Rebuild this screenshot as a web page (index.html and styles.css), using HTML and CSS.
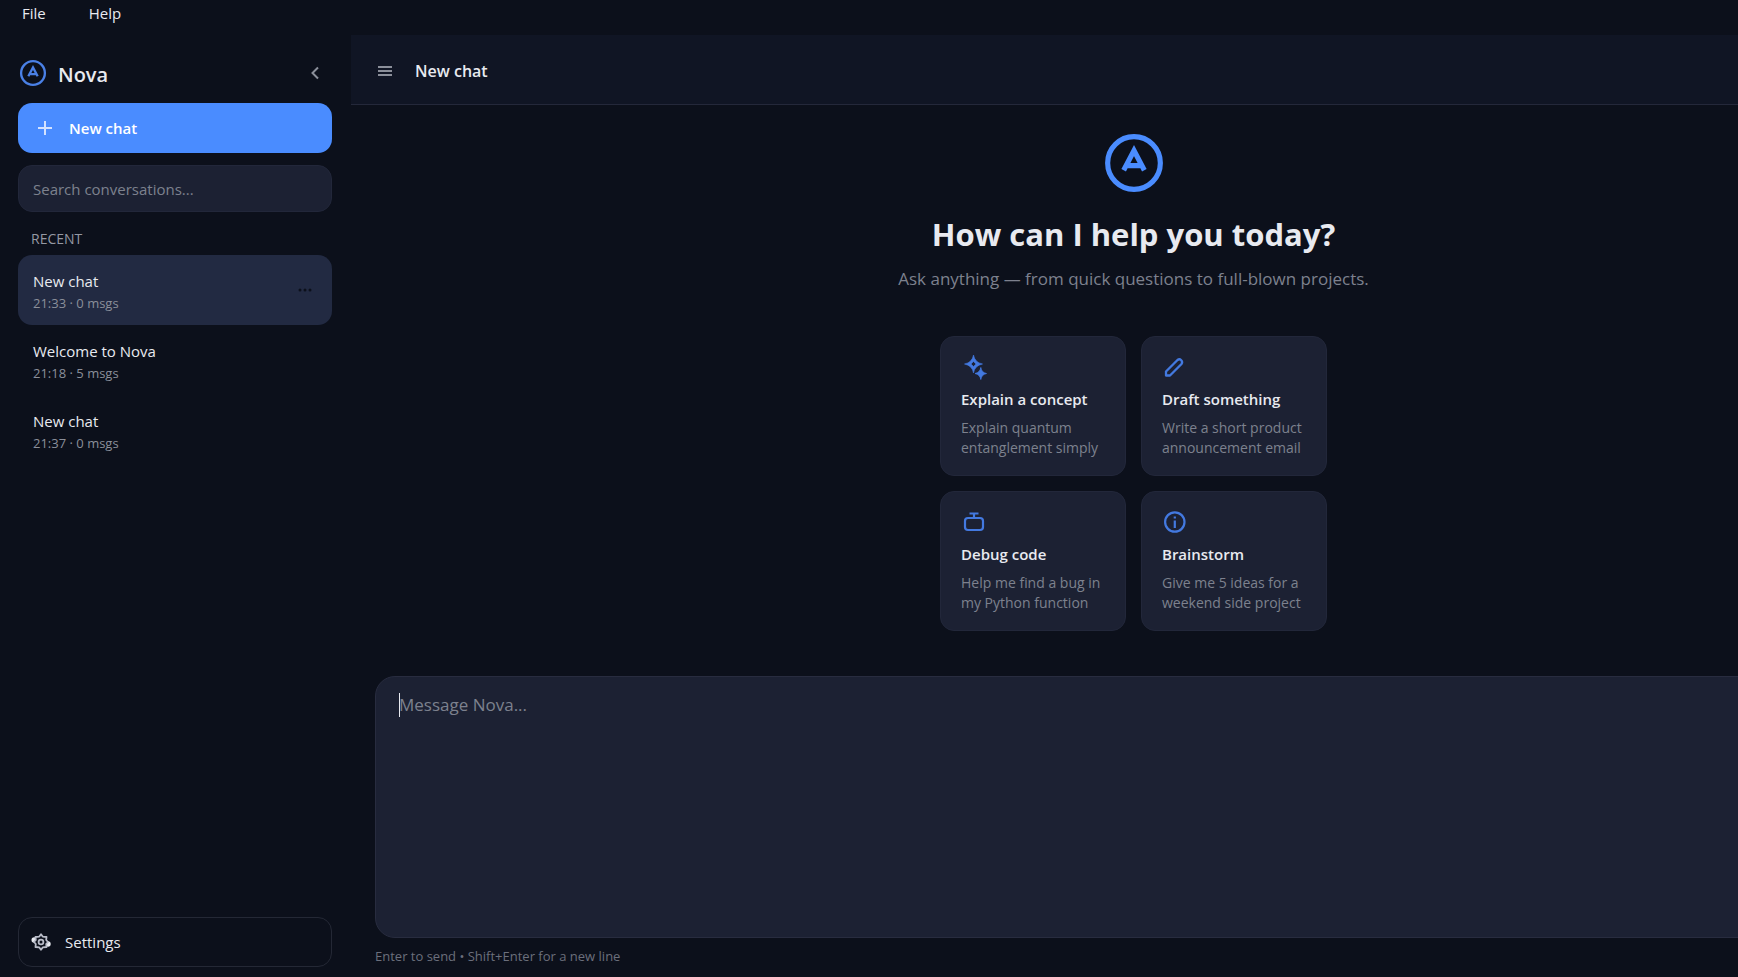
FILE: index.html
```html
<!DOCTYPE html>
<html lang="en">
<head>
    <meta charset="UTF-8">
    <meta name="viewport" content="width=device-width, initial-scale=1.0">
    <title>Nova</title>
    <link rel="stylesheet" href="styles.css">
</head>
<body>
    <nav class="menubar">
        <button type="button" class="menu-item">File</button>
        <button type="button" class="menu-item">Help</button>
    </nav>

    <div class="app">
        <aside class="sidebar">
            <div class="brand">
                <svg class="brand-logo" viewBox="0 0 60 60" fill="none" stroke="currentColor">
                    <circle cx="30" cy="30" r="25.500" stroke-width="5"/>
                    <path d="M20 37 L30 18 L40 37 M24 32.500 H36" stroke-width="5"/>
                </svg>
                <span class="brand-name">Nova</span>
                <button type="button" class="icon-button" aria-label="Collapse sidebar">
                    <svg width="10" height="14" viewBox="0 0 10 14" fill="none" stroke="currentColor" stroke-width="2"><path d="M8 1.500 L2.500 7 L8 12.500"/></svg>
                </button>
            </div>

            <button type="button" class="new-chat">
                <svg width="16" height="16" viewBox="0 0 16 16" fill="none" stroke="#d3e2ff" stroke-width="2"><path d="M8 1 V15 M1 8 H15"/></svg>
                New chat
            </button>

            <input type="search" class="search" placeholder="Search conversations..." aria-label="Search conversations">

            <h2 class="section-title">RECENT</h2>
            <ul class="chat-list">
                <li class="chat active">
                    <a href="#" class="chat-link">
                        <span class="chat-title">New chat</span>
                        <span class="chat-meta">21:33 · 0 msgs</span>
                    </a>
                    <button type="button" class="chat-more" aria-label="More">
                        <svg width="14" height="4" viewBox="0 0 14 4" fill="currentColor"><circle cx="2" cy="2" r="1.500"/><circle cx="7" cy="2" r="1.500"/><circle cx="12" cy="2" r="1.500"/></svg>
                    </button>
                </li>
                <li class="chat">
                    <a href="#" class="chat-link">
                        <span class="chat-title">Welcome to Nova</span>
                        <span class="chat-meta">21:18 · 5 msgs</span>
                    </a>
                </li>
                <li class="chat">
                    <a href="#" class="chat-link">
                        <span class="chat-title">New chat</span>
                        <span class="chat-meta">21:37 · 0 msgs</span>
                    </a>
                </li>
            </ul>

            <button type="button" class="settings">
                <svg width="20" height="18" viewBox="0 0 20 18" fill="none" stroke="#b9bcc8" stroke-width="1.800">
                    <circle cx="3.200" cy="7" r="2.700" fill="#e8eaf0" stroke="none"/>
                    <circle cx="17" cy="11" r="2.700" fill="#e8eaf0" stroke="none"/>
                    <path d="M8.300 3.600 L10 1.200 L11.700 3.600 L15.500 4 L15.200 7 L17 9 L15.200 11 L15.500 14 L11.700 14.400 L10 16.800 L8.300 14.400 L4.500 14 L4.800 11 L3 9 L4.800 7 L4.500 4 Z" fill="#0c101b" stroke-linejoin="round"/>
                    <circle cx="10" cy="9" r="2.400"/>
                </svg>
                Settings
            </button>
        </aside>

        <main class="main">
            <header class="topbar">
                <button type="button" class="menu-toggle" aria-label="Menu">
                    <svg width="16" height="12" viewBox="0 0 16 12" stroke="currentColor" stroke-width="2"><path d="M1 2 H15 M1 6 H15 M1 10 H15"/></svg>
                </button>
                <h1 class="chat-heading">New chat</h1>
            </header>

            <section class="welcome">
                <svg class="welcome-logo" viewBox="0 0 60 60" fill="none" stroke="currentColor">
                    <circle cx="30" cy="30" r="25.500" stroke-width="5"/>
                    <path d="M20 37 L30 18 L40 37 M24 32.500 H36" stroke-width="5"/>
                </svg>
                <h2 class="welcome-title">How can I help you today?</h2>
                <p class="welcome-text">Ask anything — from quick questions to full-blown projects.</p>

                <div class="cards">
                    <button type="button" class="card">
                        <svg class="card-icon" viewBox="0 0 24 24" fill="currentColor" fill-rule="evenodd">
                            <path d="M12.500 0 Q13.800 7.500 21.500 9 Q13.800 10.500 12.500 18 Q11.200 10.500 3.500 9 Q11.200 7.500 12.500 0 Z M12.500 6.500 L10 9 L12.500 11.500 L15 9 Z" stroke="currentColor" stroke-width="0.600"/>
                            <path d="M19.800 12.500 Q20.600 17.600 25.500 18.500 Q20.600 19.400 19.800 24.500 Q19 19.400 14 18.500 Q19 17.600 19.800 12.500 Z" stroke="currentColor" stroke-width="0.800"/>
                        </svg>
                        <span class="card-title">Explain a concept</span>
                        <span class="card-text">Explain quantum entanglement simply</span>
                    </button>
                    <button type="button" class="card">
                        <svg class="card-icon" viewBox="0 0 24 24" fill="none" stroke="currentColor" stroke-width="2.300" stroke-linejoin="round">
                            <path d="M4 20.500 V16.500 L15.500 5 Q17.500 3.500 19 5 Q21 7 19.500 9 L8 20.500 Z"/>
                        </svg>
                        <span class="card-title">Draft something</span>
                        <span class="card-text">Write a short product announcement email</span>
                    </button>
                    <button type="button" class="card">
                        <svg class="card-icon" viewBox="0 0 24 24" fill="none" stroke="currentColor" stroke-width="2.200">
                            <rect x="4" y="8" width="18" height="12" rx="3"/>
                            <path d="M8.500 3.500 H17.500 M13 3 V8"/>
                        </svg>
                        <span class="card-title">Debug code</span>
                        <span class="card-text">Help me find a bug in my Python function</span>
                    </button>
                    <button type="button" class="card">
                        <svg class="card-icon" viewBox="0 0 24 24" fill="none" stroke="currentColor" stroke-width="2.200">
                            <circle cx="12.800" cy="12" r="9.700"/>
                            <path d="M12.800 10.500 V18 M12.800 6.500 V8.500"/>
                        </svg>
                        <span class="card-title">Brainstorm</span>
                        <span class="card-text">Give me 5 ideas for a weekend side project</span>
                    </button>
                </div>
            </section>

            <div class="composer">
                <span class="caret"></span>
                <textarea class="composer-input" placeholder="Message Nova..." aria-label="Message Nova"></textarea>
            </div>
            <p class="hint">Enter to send • Shift+Enter for a new line</p>
        </main>
    </div>
</body>
</html>
```

FILE: styles.css
```css
* {
    box-sizing: border-box;
}
body {
    margin: 0;
    height: 100vh;
    display: flex;
    flex-direction: column;
    overflow: hidden;
    background: #0c101b;
    color: #e8eaf0;
    font-family: "Open Sans", "Noto Sans", sans-serif;
    font-size: 15px;
    line-height: 20px;
}
h1, h2, p, ul {
    margin: 0;
    padding: 0;
}
button, input, textarea {
    font: inherit;
    color: inherit;
}
button {
    background: none;
    border: none;
    padding: 0;
    cursor: pointer;
}
svg {
    flex-shrink: 0;
    overflow: visible;
}

/* menu bar */
.menubar {
    display: flex;
    gap: 43px;
    height: 35px;
    padding: 3px 22px 12px;
}

/* sidebar */
.app {
    flex: 1;
    display: flex;
    min-height: 0;
}
.sidebar {
    width: 351px;
    flex-shrink: 0;
    display: flex;
    flex-direction: column;
    padding: 18px 19px 10px 18px;
}
.brand {
    display: flex;
    align-items: center;
    height: 40px;
    margin-bottom: 10px;
    padding: 0 12px 0 1px;
}
.brand-logo {
    width: 28px;
    height: 28px;
    color: #4a80e6;
}
.brand-name {
    flex: 1;
    padding-top: 3px;
    margin-left: 11px;
    font-size: 20px;
    font-weight: 600;
}
.icon-button {
    display: flex;
    color: #8b8f9a;
}
.new-chat {
    display: flex;
    align-items: center;
    gap: 16px;
    height: 50px;
    padding: 0 19px;
    border-radius: 14px;
    background: #4a8cff;
    color: #fff;
    font-weight: 600;
}
.search {
    height: 47px;
    margin-top: 12px;
    padding: 0 14px;
    border: 1px solid #22273a;
    border-radius: 14px;
    background: #1c2133;
}
.search::placeholder, .composer-input::placeholder {
    color: #7d818e;
    opacity: 1;
}
.section-title {
    margin: 17px 13px 6px;
    color: #9498a3;
    font-size: 14px;
    font-weight: 500;
}
.chat-list {
    flex: 1;
    list-style: none;
}
.chat {
    display: flex;
    align-items: center;
    height: 70px;
    padding: 0 20px 0 15px;
    border-radius: 14px;
}
.chat.active {
    background: #222a42;
}
.chat-link {
    flex: 1;
    padding-top: 3px;
    color: inherit;
    text-decoration: none;
}
.chat-title, .chat-meta {
    display: block;
    line-height: 22px;
}
.chat-meta {
    color: #8b8f9a;
    font-size: 13px;
}
.chat-more {
    display: flex;
    color: #0c101b;
}
.settings {
    display: flex;
    align-items: center;
    gap: 14px;
    height: 50px;
    padding: 0 12px;
    border: 1px solid #242835;
    border-radius: 14px;
}

/* main area runs past the right edge of the window */
.main {
    flex: 1;
    display: flex;
    flex-direction: column;
    margin-right: -178px;
    min-width: 0;
}
.topbar {
    display: flex;
    align-items: center;
    gap: 22px;
    height: 70px;
    padding: 2px 26px 0;
    border-bottom: 1px solid #24283a;
    background: #101524;
}
.menu-toggle {
    display: flex;
    color: #8b8f9a;
}
.chat-heading {
    font-size: 16px;
    font-weight: 600;
}
.welcome {
    display: flex;
    flex-direction: column;
    align-items: center;
    padding-top: 27px;
}
.welcome-logo {
    width: 62px;
    height: 62px;
    color: #4a8cff;
}
.welcome-title {
    margin-top: 18px;
    font-size: 31px;
    line-height: 44px;
}
.welcome-text {
    margin-top: 11px;
    color: #7d818e;
    font-size: 17px;
    line-height: 24px;
}
.cards {
    display: grid;
    grid-template-columns: 186px 186px;
    gap: 15px;
    margin-top: 45px;
}
.card {
    display: flex;
    flex-direction: column;
    align-items: flex-start;
    height: 140px;
    padding: 18px 20px;
    border: 1px solid #22273a;
    border-radius: 14px;
    background: #1c2133;
    text-align: left;
}
.card-icon {
    width: 24px;
    height: 24px;
    color: #4379e0;
}
.card-title {
    margin-top: 10px;
    font-weight: 600;
}
.card-text {
    margin-top: 9px;
    color: #7d818e;
    font-size: 14px;
}

/* message box */
.composer {
    position: relative;
    flex: 1;
    display: flex;
    margin: 45px 24px 0;
    border: 1px solid #282c3f;
    border-radius: 20px;
    background: #1c2133;
}
.composer-input {
    flex: 1;
    padding: 16px 23px;
    border: none;
    outline: none;
    resize: none;
    background: none;
    font-size: 17px;
    line-height: 24px;
}
.caret {
    position: absolute;
    top: 16px;
    left: 23px;
    width: 1px;
    height: 24px;
    background: #e8eaf0;
}
.hint {
    margin: 8px 24px 11px;
    color: #6b6f7c;
    font-size: 13px;
}
```
